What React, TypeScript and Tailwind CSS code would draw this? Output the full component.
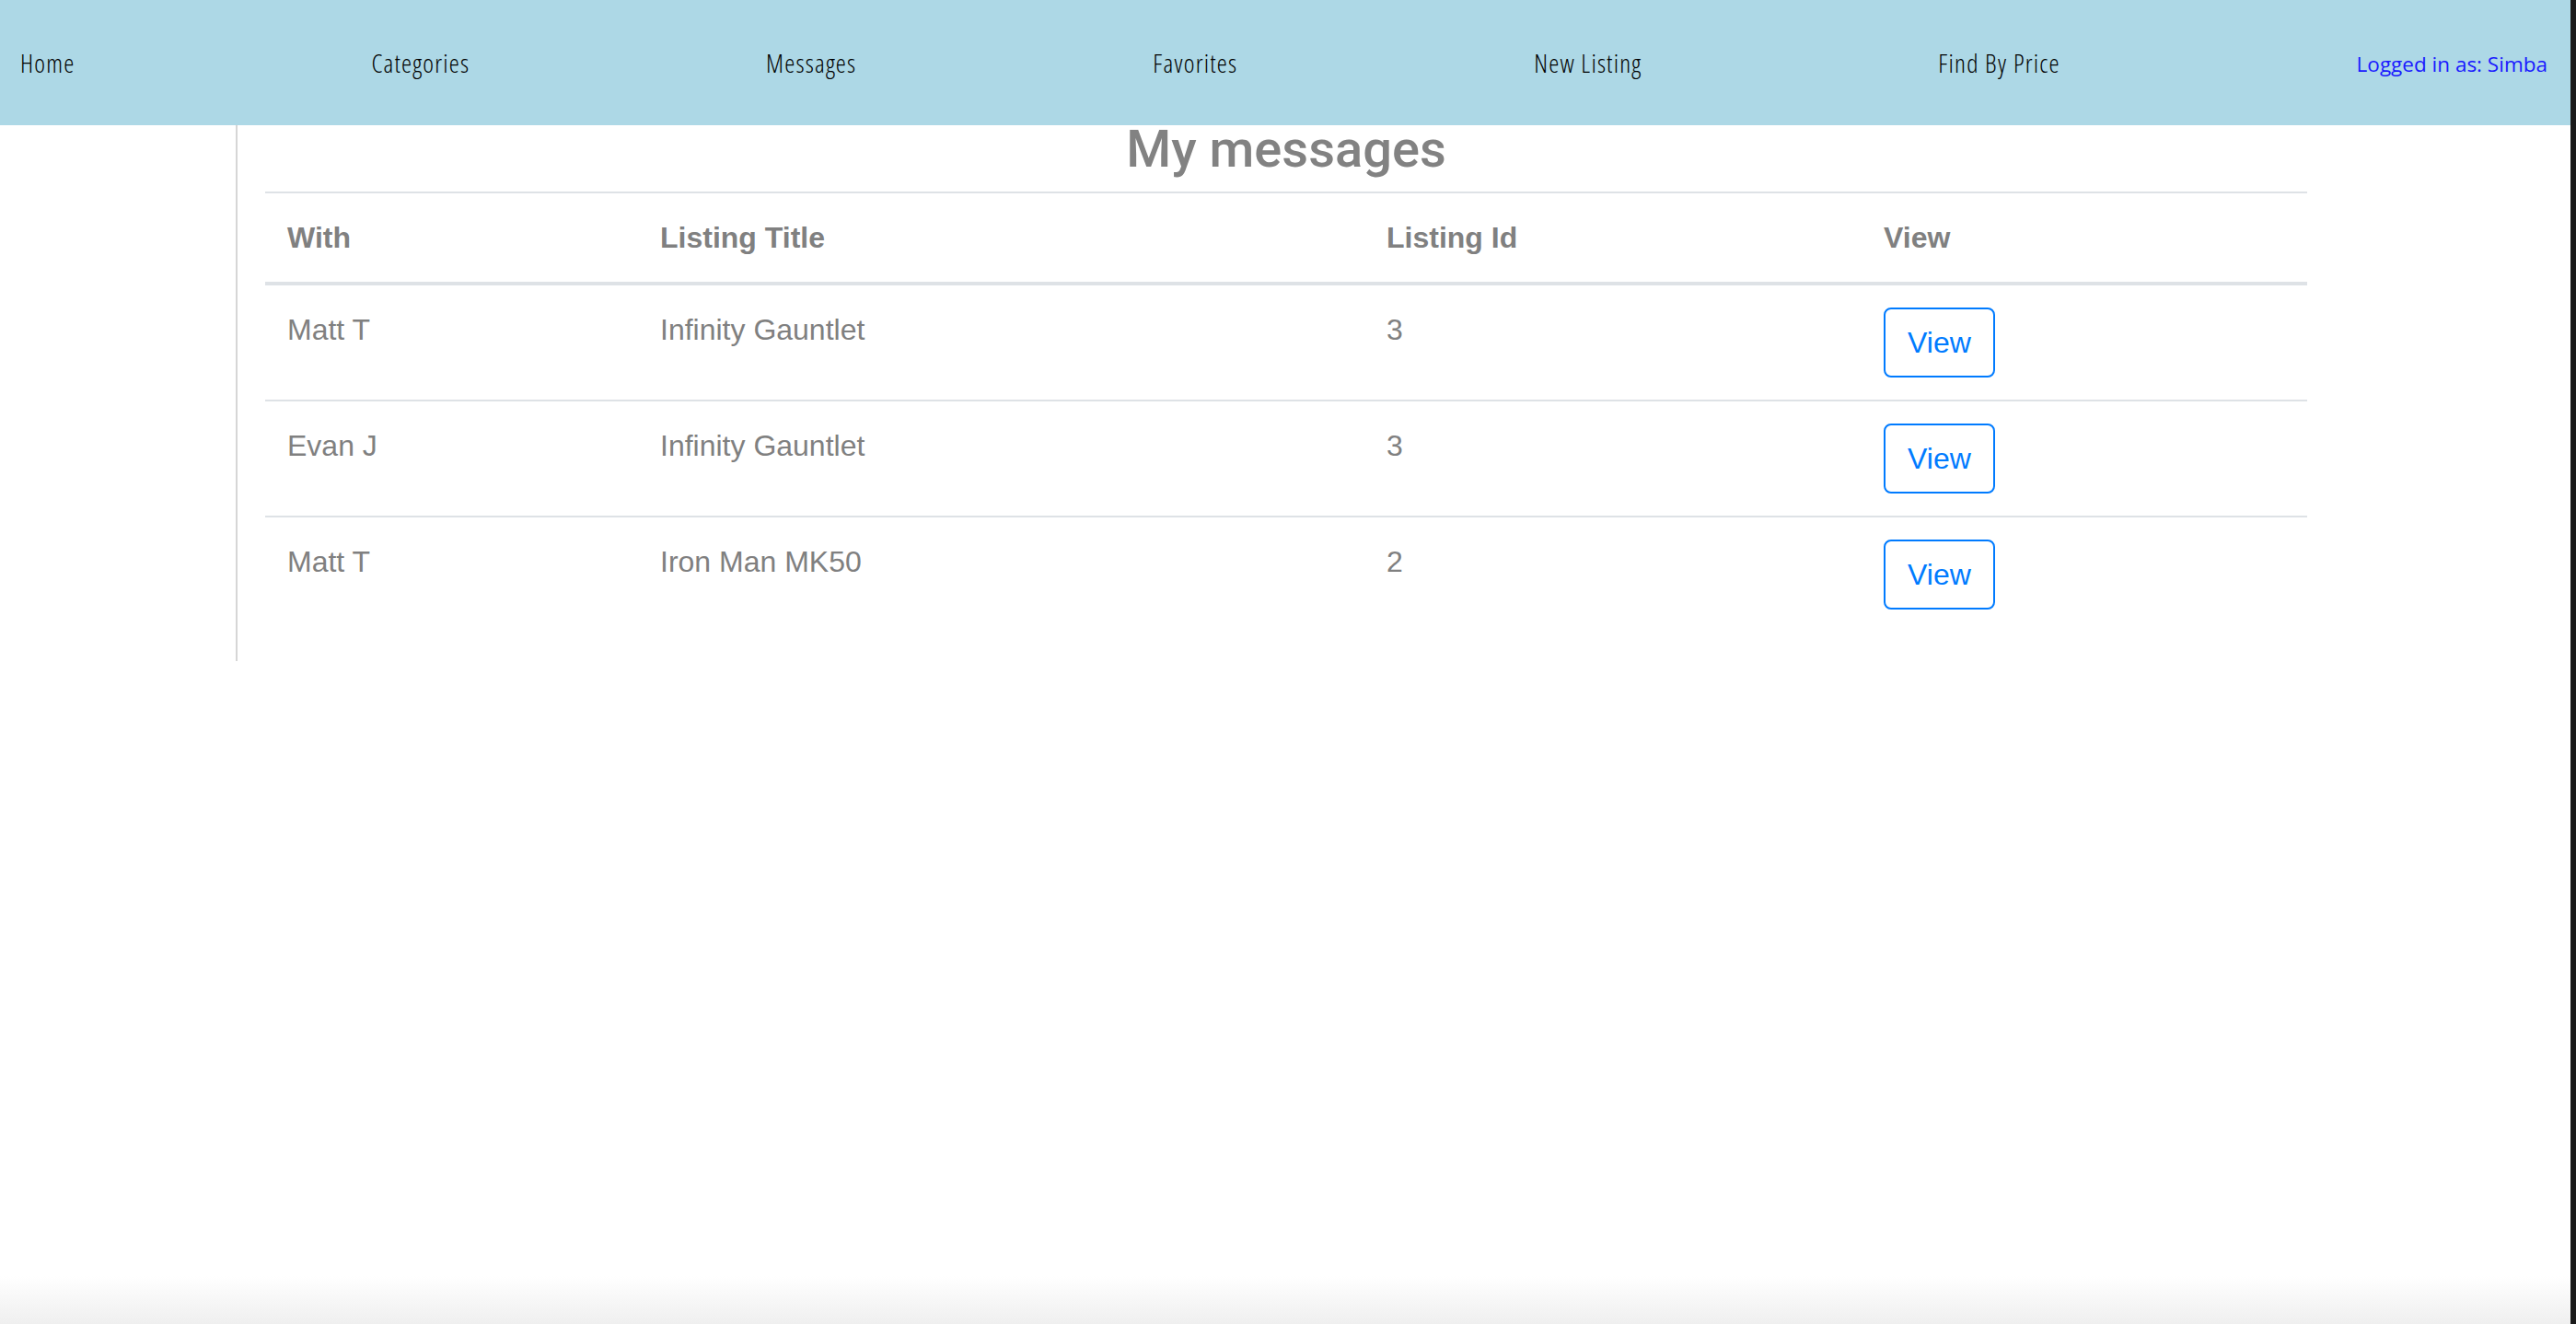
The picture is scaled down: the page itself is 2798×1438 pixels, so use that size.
import { FC } from "react";

type Row = { withUser: string; title: string; listingId: number };

const rows: Row[] = [
  { withUser: "Matt T", title: "Infinity Gauntlet", listingId: 3 },
  { withUser: "Evan J", title: "Infinity Gauntlet", listingId: 3 },
  { withUser: "Matt T", title: "Iron Man MK50", listingId: 2 },
];

const navLinks = ["Home", "Categories", "Messages", "Favorites", "New Listing", "Find By Price"];

const NavBar: FC = () => {
  return (
    <nav className="h-[136px] bg-[#add8e6] flex items-center justify-between pl-[22px] pr-[25px]">
      {navLinks.map((label) => (
        <a
          key={label}
          className="font-['Open_Sans',sans-serif] font-light font-stretch-condensed text-[28px] tracking-[1.2px] text-black"
        >
          {label}
        </a>
      ))}
      <a className="font-['Open_Sans',sans-serif] text-[22.5px] text-[#1a1aff] pt-[4px]">
        Logged in as: Simba
      </a>
    </nav>
  );
};

const ViewButton: FC = () => (
  <button className="inline-block border-2 border-[#007bff] rounded-[8px] px-[24px] py-[12px] text-[32px] leading-[48px] text-[#007bff] bg-white">
    View
  </button>
);

export default function App() {
  return (
    <div className="flex min-h-[1438px] w-full font-['Liberation_Sans',Arial,sans-serif]">
      <div className="flex-1 flex flex-col bg-white">
        <NavBar />
        <main className="flex-1">
          <div className="mx-auto w-[2280px] border-l-2 border-[#d6d6d6] px-[30px] pb-[32px]">
            <h3 className="text-center font-['Roboto',sans-serif] text-[56px] leading-[52px] font-medium text-[#828282] mb-[20px]">
              My messages
            </h3>
            <table className="w-full table-fixed border-collapse text-[32px] leading-[48px] text-[#808080]">
              <colgroup>
                <col className="w-[405px]" />
                <col className="w-[789px]" />
                <col className="w-[540px]" />
                <col />
              </colgroup>
              <thead>
                <tr>
                  {["With", "Listing Title", "Listing Id", "View"].map((h) => (
                    <th
                      key={h}
                      className="text-left font-bold p-[24px] border-t-2 border-b-4 border-[#dee2e6] align-bottom"
                    >
                      {h}
                    </th>
                  ))}
                </tr>
              </thead>
              <tbody>
                {rows.map((r, i) => (
                  <tr key={i}>
                    <td className="p-[24px] border-t-2 border-[#dee2e6] align-top">{r.withUser}</td>
                    <td className="p-[24px] border-t-2 border-[#dee2e6] align-top">{r.title}</td>
                    <td className="p-[24px] border-t-2 border-[#dee2e6] align-top">{r.listingId}</td>
                    <td className="p-[24px] border-t-2 border-[#dee2e6] align-top">
                      <ViewButton />
                    </td>
                  </tr>
                ))}
              </tbody>
            </table>
          </div>
        </main>
        <div className="h-[52px] bg-gradient-to-b from-white to-[#efefef]" />
      </div>
      <div className="w-[6px] bg-[#1a1a1a]" />
    </div>
  );
}
